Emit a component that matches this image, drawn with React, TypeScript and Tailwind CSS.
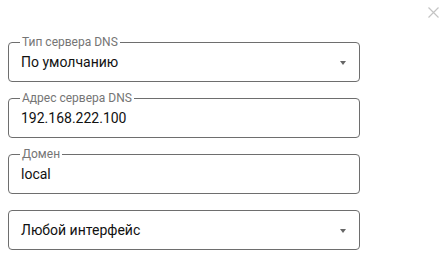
import React from 'react';

type FieldProps = {
  label?: string;
  value: string;
  select?: boolean;
};

function Field({ label, value, select }: FieldProps) {
  return (
    <div className="relative flex h-[40px] w-[352px] items-center rounded-[4px] border border-[#6e6e6e] pl-[12px] pr-[12px]">
      {label && (
        <span className="absolute -top-[8px] left-[11px] bg-white px-[2px] text-[12px] leading-[14px] text-[#757575]">
          {label}
        </span>
      )}
      <span className="flex-1 text-[14px] leading-[18px] text-[#111]">{value}</span>
      {select && (
        <svg width="6" height="4" viewBox="0 0 6 4" className="mr-[1px] mt-[1px]">
          <path d="M0 0h6L3 4z" fill="#666" />
        </svg>
      )}
    </div>
  );
}

export default function App() {
  return (
    <div className="relative h-[260px] w-[447px] bg-white" style={{ fontFamily: 'Roboto, "Noto Sans", sans-serif' }}>
      <button className="absolute right-[8px] top-[6px] flex h-[12px] w-[12px] items-center justify-center">
        <svg width="11" height="11" viewBox="0 0 11 11">
          <path d="M0.5 0.5l10 10M10.5 0.5l-10 10" stroke="#c4c4c4" strokeWidth="1.2" />
        </svg>
      </button>
      <div className="flex flex-col gap-[16px] pl-[8px] pt-[42px]">
        <Field label="Тип сервера DNS" value="По умолчанию" select />
        <Field label="Адрес сервера DNS" value="192.168.222.100" />
        <Field label="Домен" value="local" />
        <Field value="Любой интерфейс" select />
      </div>
    </div>
  );
}
